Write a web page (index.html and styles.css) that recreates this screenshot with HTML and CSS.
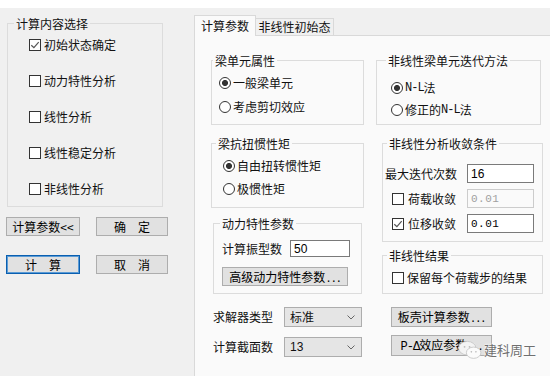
FILE: index.html
```html
<!DOCTYPE html>
<html lang="zh-CN">
<head>
<meta charset="utf-8">
<title>计算参数</title>
<link rel="stylesheet" href="styles.css">
</head>
<body>
<div class="topbar"></div>
<div class="window">
  <div class="leftcol">
    <fieldset class="group g-calc">
      <legend>计算内容选择</legend>
      <div class="rows">
        <label class="opt"><span class="cb"><svg viewBox="0 0 10 10" width="10" height="10"><path d="M1.3 5.2 L3.9 7.7 L8.7 2.2" fill="none" stroke="#555" stroke-width="1.2"/></svg></span>初始状态确定</label>
        <label class="opt"><span class="cb"></span>动力特性分析</label>
        <label class="opt"><span class="cb"></span>线性分析</label>
        <label class="opt"><span class="cb"></span>线性稳定分析</label>
        <label class="opt"><span class="cb"></span>非线性分析</label>
      </div>
    </fieldset>
    <div class="btn-grid">
      <button class="btn">计算参数&lt;&lt;</button>
      <button class="btn">确　定</button>
      <button class="btn focus">计　算</button>
      <button class="btn">取　消</button>
    </div>
  </div>

  <div class="tabctl">
    <div class="tabs">
      <div class="tab active">计算参数</div>
      <div class="tab">非线性初始态</div>
    </div>
    <div class="panel">
      <div class="pcol pcol-left">
        <fieldset class="group g1">
          <legend>梁单元属性</legend>
          <div class="rows">
            <div class="opt"><span class="rb on"></span>一般梁单元</div>
            <div class="opt"><span class="rb"></span>考虑剪切效应</div>
          </div>
        </fieldset>
        <fieldset class="group g2">
          <legend>梁抗扭惯性矩</legend>
          <div class="rows">
            <div class="opt"><span class="rb on"></span>自由扭转惯性矩</div>
            <div class="opt"><span class="rb"></span>极惯性矩</div>
          </div>
        </fieldset>
        <fieldset class="group g3">
          <legend>动力特性参数</legend>
          <div class="rows">
            <div class="field-row"><span class="lbl">计算振型数</span><input class="input short" type="text" value="50"></div>
            <button class="btn wide">高级动力特性参数<span class="dots">...</span></button>
          </div>
        </fieldset>
        <div class="sel-rows">
          <div class="sel-row"><span class="lbl">求解器类型</span><div class="select"><span>标准</span><svg viewBox="0 0 8 5" width="8" height="5"><path d="M0.5 0.5 L4 4 L7.5 0.5" fill="none" stroke="#666" stroke-width="1"/></svg></div></div>
          <div class="sel-row"><span class="lbl">计算截面数</span><div class="select"><span class="num">13</span><svg viewBox="0 0 8 5" width="8" height="5"><path d="M0.5 0.5 L4 4 L7.5 0.5" fill="none" stroke="#666" stroke-width="1"/></svg></div></div>
        </div>
      </div>

      <div class="pcol pcol-right">
        <fieldset class="group g4">
          <legend>非线性梁单元迭代方法</legend>
          <div class="rows">
            <div class="opt"><span class="rb on"></span><span class="sim">N-L</span>法</div>
            <div class="opt"><span class="rb"></span>修正的<span class="sim">N-L</span>法</div>
          </div>
        </fieldset>
        <fieldset class="group g5">
          <legend>非线性分析收敛条件</legend>
          <div class="rows">
            <div class="field-row"><span class="lbl">最大迭代次数</span><input class="input mid" type="text" value="16"></div>
            <div class="field-row"><label class="lbl chk"><span class="cb"></span>荷载收敛</label><input class="input mid mono" type="text" value="0.01" disabled></div>
            <div class="field-row"><label class="lbl chk"><span class="cb"><svg viewBox="0 0 10 10" width="10" height="10"><path d="M1.3 5.2 L3.9 7.7 L8.7 2.2" fill="none" stroke="#555" stroke-width="1.2"/></svg></span>位移收敛</label><input class="input mid mono" type="text" value="0.01"></div>
          </div>
        </fieldset>
        <fieldset class="group g6">
          <legend>非线性结果</legend>
          <div class="rows">
            <label class="opt"><span class="cb"></span>保留每个荷载步的结果</label>
          </div>
        </fieldset>
        <div class="btn-col">
          <button class="btn side">板壳计算参数<span class="dots">...</span></button>
          <button class="btn side tall"><span class="sim">P-Δ</span>效应参数<span class="dots">...</span></button>
        </div>
      </div>

      <div class="watermark">
        <svg viewBox="0 0 28 22" width="26" height="20">
          <ellipse cx="11" cy="9" rx="9.5" ry="7.5" fill="#f4f4f4" stroke="#c8c8c8" stroke-width="1"/>
          <ellipse cx="18" cy="14" rx="8" ry="6.2" fill="#fbfbfb" stroke="#c8c8c8" stroke-width="1"/>
          <circle cx="8" cy="7.5" r="1" fill="#bbb"/>
          <circle cx="13.5" cy="7.5" r="1" fill="#bbb"/>
          <circle cx="15.5" cy="13" r="0.9" fill="#bbb"/>
          <circle cx="20.5" cy="13" r="0.9" fill="#bbb"/>
        </svg>
        <span class="wm-text">建科周工</span>
      </div>
    </div>
  </div>
</div>
</body>
</html>
```

FILE: styles.css
```css
* { box-sizing: border-box; }
html, body { margin: 0; }
body {
  width: 550px;
  height: 376px;
  overflow: hidden;
  background: #f0f0f0;
  font-family: "Noto Sans CJK SC", "Noto Sans", sans-serif;
  font-size: 12px;
  line-height: 16px;
  color: #111;
}
.topbar { height: 8px; background: #fff; }
.window { display: flex; height: 368px; }

/* group boxes */
.group {
  margin: 0;
  padding: 0;
  border: 1px solid #dcdcdc;
  min-width: 0;
}
.group legend {
  padding: 0 2px;
  height: 15px;
  line-height: 15px;
}
.rows { display: flex; flex-direction: column; }
.opt { display: flex; align-items: center; height: 16px; white-space: nowrap; }

.cb {
  flex: none;
  width: 12px;
  height: 12px;
  border: 1px solid #333;
  background: #fff;
  display: inline-flex;
  align-items: center;
  justify-content: center;
  margin-right: 3px;
}
.rb {
  flex: none;
  width: 12px;
  height: 12px;
  border: 1px solid #333;
  border-radius: 50%;
  background: #fff;
  margin-right: 2px;
}
.rb.on { background: radial-gradient(circle, #333 0 2.7px, #fff 3.3px); }
.sim { font-family: "Liberation Mono", monospace; font-size: 12px; letter-spacing: -1px; }

/* left column */
.leftcol { width: 194px; flex: none; }
.g-calc { margin: 8px 0 0 7px; width: 156px; }
.g-calc legend { margin-left: 6px; }
.g-calc .rows { padding: 6px 0 9px 21px; gap: 20px; }

.btn {
  font: inherit;
  font-size: 12px;
  color: #000;
  background: #e1e1e1;
  border: 1px solid #adadad;
  height: 19px;
  padding: 0;
  line-height: 17px;
  white-space: nowrap;
}
.btn.focus { border: 1px solid #0a5fb0; box-shadow: inset 0 0 0 1px #5b9bd5; }
.dots { font-family: "Liberation Mono", monospace; font-size: 11px; letter-spacing: -1.5px; }
.btn-grid {
  display: grid;
  grid-template-columns: 74px 72px;
  column-gap: 16px;
  row-gap: 19px;
  margin: 10px 0 0 6px;
}

/* tab control */
.tabctl { flex: 1; display: flex; flex-direction: column; min-width: 0; }
.tabs { height: 27px; display: flex; align-items: flex-end; }
.tab {
  height: 17px;
  width: 78px;
  border-top: 1px solid #d9d9d9;
  border-right: 1px solid #d9d9d9;
  text-align: center;
  line-height: 16px;
  white-space: nowrap;
}
.tab.active {
  height: 21px;
  width: 62px;
  margin-bottom: -1px;
  background: #fafafa;
  border: 1px solid #d9d9d9;
  border-bottom: none;
  line-height: 19px;
  position: relative;
  z-index: 1;
}
.panel {
  flex: 1;
  background: #fafafa;
  border-top: 1px solid #d9d9d9;
  border-left: 1px solid #d9d9d9;
  display: flex;
  gap: 12px;
  padding-left: 16px;
  position: relative;
}
.pcol { flex: none; }
.pcol-left { width: 153px; }
.pcol-right { width: 167px; }

.g1 { margin-top: 17px; }
.g1 legend { margin-left: 1px; }
.g1 .rows { padding: 7px 0 9px 7px; gap: 8px; }

.g2 { margin-top: 11px; }
.g2 legend { margin-left: 4px; }
.g2 .rows { padding: 7px 0 10px 11px; gap: 7px; }

.g3 { margin: 8px 0 0 2px; width: 149px; }
.g3 legend { margin-left: 6px; }
.g3 .rows { padding: 9px 0 7px 8px; align-items: flex-start; }
.g3 .btn.wide { width: 126px; margin-top: 10px; }

.field-row { display: flex; align-items: center; height: 17px; }
.lbl { white-space: nowrap; }
.g3 .lbl { width: 68px; }
.input {
  font-family: "Liberation Sans", sans-serif;
  font-size: 12px;
  color: #000;
  height: 17px;
  border: 1px solid #7a7a7a;
  background: #fff;
  padding: 0 3px;
  margin: 0;
  outline: none;
}
.input.short { width: 60px; }
.input.mid { width: 67px; height: 19px; }
.input.mono { font-family: "Liberation Mono", monospace; font-size: 11px; letter-spacing: 0.5px; }
.input:disabled { border-color: #cccccc; color: #a0a0a0; background: #fafafa; }

.sel-rows { display: flex; flex-direction: column; gap: 10px; margin: 13px 0 0 2px; }
.sel-row { display: flex; align-items: center; height: 20px; }
.sel-row .lbl { width: 71px; }
.select {
  width: 78px;
  height: 20px;
  background: #e5e5e5;
  border: 1px solid #adadad;
  display: flex;
  align-items: center;
  justify-content: space-between;
  padding: 0 6px 0 5px;
}
.num { font-family: "Liberation Sans", sans-serif; }

.g4 { margin-top: 17px; width: 165px; }
.g4 legend { margin-left: 9px; }
.g4 .rows { padding: 12px 0 6px 14px; gap: 6px; }

.g5 { margin: 11px 0 0 6px; width: 161px; }
.g5 legend { margin-left: 4px; }
.g5 .rows { padding: 13px 0 8px 2px; gap: 6px; }
.g5 .field-row { height: 19px; }
.g5 .lbl { width: 82px; display: flex; align-items: center; }
.g5 .lbl.chk { padding-left: 7px; }
.g5 .lbl.chk .cb { margin-right: 4px; }

.g6 { margin: 6px 0 0 6px; width: 161px; }
.g6 legend { margin-left: 4px; }
.g6 .rows { padding: 7px 0 7px 9px; }

.btn-col { display: flex; flex-direction: column; gap: 8px; margin: 13px 0 0 15px; }
.btn.side { width: 101px; height: 20px; line-height: 18px; }
.btn.side.tall { height: 21px; }

.watermark {
  position: absolute;
  left: 262px;
  top: 304px;
  display: flex;
  align-items: center;
  gap: 1px;
}
.wm-text {
  font-size: 13px;
  color: #6f6f6f;
  text-shadow: 0 0 2px #fff, 0 0 2px #fff;
}
```
